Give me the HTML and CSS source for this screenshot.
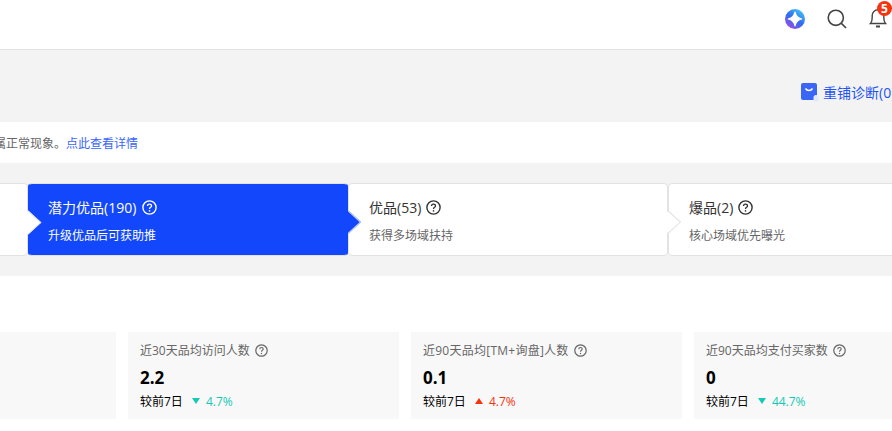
FILE: index.html
```html
<!DOCTYPE html>
<html lang="en">
<head>
    <meta charset="UTF-8">
    <meta name="viewport" content="width=device-width, initial-scale=1.0">
    <title>商品诊断</title>
    <link rel="stylesheet" href="styles.css">
</head>
<body>
    <!-- Top bar -->
    <header class="topbar">
        <svg class="top-icon ai-icon" width="20" height="20" viewBox="0 0 20 20">
            <defs>
                <linearGradient id="aiGrad" x1="0.85" y1="0.05" x2="0.2" y2="1">
                    <stop offset="0" stop-color="#45c8f7"/>
                    <stop offset="0.5" stop-color="#2f6cf0"/>
                    <stop offset="1" stop-color="#a24be6"/>
                </linearGradient>
            </defs>
            <circle cx="10" cy="10" r="10" fill="url(#aiGrad)"/>
            <path d="M10 3.2C10.8 7 13 9.2 16.8 10C13 10.8 10.8 13 10 16.8C9.2 13 7 10.8 3.2 10C7 9.2 9.2 7 10 3.2Z" fill="#fff" stroke="#fff" stroke-width="1.2" stroke-linejoin="round"/>
        </svg>
        <svg class="top-icon search-icon" width="20" height="20" viewBox="0 0 20 20" fill="none" stroke="#444" stroke-width="1.6">
            <circle cx="8.8" cy="8.8" r="7.6"/>
            <path d="M14.4 14.4L19 19"/>
        </svg>
        <div class="bell">
            <svg width="18" height="22" viewBox="0 0 18 22" fill="none" stroke="#444" stroke-width="1.4">
                <path d="M1.5 17.5C3 16 3.2 14.5 3.2 11.5V9.5C3.2 6.2 5.8 3.8 9 3.8C12.2 3.8 14.8 6.2 14.8 9.5V11.5C14.8 14.5 15 16 16.5 17.5Z"/>
                <path d="M7 20.5H11" stroke-width="2"/>
            </svg>
            <span class="badge">5</span>
        </div>
    </header>

    <!-- Toolbar -->
    <div class="toolbar">
        <svg class="toolbar-icon" width="18" height="20" viewBox="0 0 18 20">
            <rect x="0" y="1" width="16" height="17" rx="2" fill="#3a66f5"/>
            <path d="M4.5 6.5C6 9 10 9 11.5 6.5" fill="none" stroke="#fff" stroke-width="1.5"/>
            <rect x="12.5" y="13" width="5" height="7" rx="2.5" fill="#e3e9fd"/>
        </svg>
        <span class="toolbar-link">重铺诊断(0)</span>
    </div>

    <!-- Notice -->
    <div class="notice">
        <div class="notice-text">
            <span>数据变化属正常现象。</span>
            <a class="notice-link">点此查看详情</a>
        </div>
    </div>

    <!-- Steps -->
    <div class="steps-band">
        <div class="steps">
            <div class="step step-first"></div>
            <div class="step step-active">
                <div class="step-title">潜力优品(190)
                    <svg class="help" width="15" height="15" viewBox="0 0 15 15"><use href="#helpIcon"/></svg>
                </div>
                <div class="step-sub">升级优品后可获助推</div>
                <span class="arrow arrow-blue"></span>
            </div>
            <div class="step">
                <div class="step-title">优品(53)
                    <svg class="help" width="15" height="15" viewBox="0 0 15 15"><use href="#helpIcon"/></svg>
                </div>
                <div class="step-sub">获得多场域扶持</div>
                <span class="arrow"></span>
            </div>
            <div class="step">
                <div class="step-title">爆品(2)
                    <svg class="help" width="15" height="15" viewBox="0 0 15 15"><use href="#helpIcon"/></svg>
                </div>
                <div class="step-sub">核心场域优先曝光</div>
            </div>
        </div>
    </div>

    <!-- Metric cards -->
    <div class="cards">
        <div class="card"></div>
        <div class="card">
            <div class="card-label">近30天品均访问人数
                <svg class="help help-sm" width="13" height="13" viewBox="0 0 15 15"><use href="#helpIcon"/></svg>
            </div>
            <div class="card-value">2.2</div>
            <div class="card-compare">较前7日 <i class="tri tri-down"></i><span class="pct pct-down">4.7%</span></div>
        </div>
        <div class="card">
            <div class="card-label card-label-wide">近90天品均[TM+询盘]人数
                <svg class="help help-sm" width="13" height="13" viewBox="0 0 15 15"><use href="#helpIcon"/></svg>
            </div>
            <div class="card-value">0.1</div>
            <div class="card-compare">较前7日 <i class="tri tri-up"></i><span class="pct pct-up">4.7%</span></div>
        </div>
        <div class="card">
            <div class="card-label">近90天品均支付买家数
                <svg class="help help-sm" width="13" height="13" viewBox="0 0 15 15"><use href="#helpIcon"/></svg>
            </div>
            <div class="card-value">0</div>
            <div class="card-compare">较前7日 <i class="tri tri-down"></i><span class="pct pct-down">44.7%</span></div>
        </div>
    </div>

    <!-- Shared help icon -->
    <svg class="defs" width="0" height="0">
        <symbol id="helpIcon" viewBox="0 0 15 15">
            <circle cx="7.5" cy="7.5" r="6.6" fill="none" stroke="currentColor" stroke-width="1.4"/>
            <path d="M5.5 6C5.5 4.8 6.4 4.1 7.5 4.1C8.7 4.1 9.5 4.9 9.5 5.9C9.5 7.3 7.5 7.3 7.5 9" fill="none" stroke="currentColor" stroke-width="1.3"/>
            <circle cx="7.5" cy="10.9" r="0.8" fill="currentColor"/>
        </symbol>
    </svg>
</body>
</html>
```

FILE: styles.css
```css
* {
    box-sizing: border-box;
}

html, body {
    height: 100%;
}

body {
    margin: 0;
    background: #fff;
    overflow: hidden;
    font-family: "Open Sans", "Noto Sans CJK SC", sans-serif;
    color: #333;
}

.topbar {
    display: flex;
    justify-content: flex-end;
    align-items: center;
    height: 50px;
    padding: 0 5px 12px 0;
    background: #fff;
    border-bottom: 1px solid #e2e2e2;
}

.ai-icon {
    margin-right: 22px;
}

.search-icon {
    margin-right: 22px;
}

.bell {
    position: relative;
    width: 18px;
    height: 22px;
    margin-bottom: 4px;
}

.badge {
    position: absolute;
    top: -5px;
    left: 8px;
    width: 15px;
    height: 15px;
    border-radius: 50%;
    background: #f5330f;
    color: #fff;
    font-size: 12px;
    font-weight: 700;
    line-height: 15px;
    text-align: center;
}

.toolbar {
    display: flex;
    align-items: center;
    height: 72px;
    padding: 12px 0 0 801px;
    background: #f3f3f3;
    white-space: nowrap;
}

.toolbar-icon {
    flex-shrink: 0;
    margin-right: 4px;
}

.toolbar-link {
    font-size: 14px;
    color: #1f55f5;
}

.notice {
    height: 41px;
    background: #fff;
    display: flex;
    align-items: center;
}

.notice-text {
    display: flex;
    justify-content: flex-end;
    width: 138px;
    font-size: 12px;
    color: #666;
    white-space: nowrap;
}

.notice-link {
    color: #3a66f5;
}

.steps-band {
    height: 113px;
    padding-top: 20px;
    background: #f3f3f3;
}

.steps {
    display: flex;
    height: 73px;
    margin-left: -292px;
}

.step {
    position: relative;
    flex: 0 0 320px;
    padding: 13px 20px 0;
    background: #fff;
    border: 1px solid #e2e2e2;
    border-radius: 4px;
    color: #333;
}

.step-title {
    display: flex;
    align-items: center;
    gap: 4px;
    height: 20px;
    font-size: 14px;
}

.step-sub {
    margin-top: 10px;
    font-size: 12px;
    line-height: 18px;
    color: #666;
}

.step-active {
    padding-left: 19px;
    background: #1247fb;
    border-color: #e2e2e2 #1247fb;
    color: #fff;
}

.step-active .step-title {
    gap: 5px;
}

.step-active .step-sub {
    color: #fff;
}

/* chevron between two steps, sits on the shared edge */
.arrow {
    position: absolute;
    top: 30px;
    right: -9px;
    z-index: 2;
    width: 15.5px;
    height: 15.5px;
    background: #fff;
    border-top: 1px solid #e2e2e2;
    border-right: 1px solid #e2e2e2;
    transform: scaleX(1.09) rotate(45deg);
}

.arrow-blue {
    background: #1247fb;
    border-color: #c9d4f7;
}

.step-first + .step-active::before {
    content: "";
    position: absolute;
    top: 30px;
    left: -9px;
    width: 15.5px;
    height: 15.5px;
    background: #fff;
    border-top: 1px solid #e2e2e2;
    border-right: 1px solid #e2e2e2;
    transform: scaleX(1.09) rotate(45deg);
}

.help {
    flex-shrink: 0;
    margin-left: 1px;
}

.defs {
    position: absolute;
}

.cards {
    display: flex;
    gap: 12px;
    margin: 56px 0 0 -155px;
}

.card {
    flex: 0 0 271px;
    height: 87px;
    padding: 9px 12px 0;
    background: #f8f8f8;
}

.card-label {
    display: flex;
    align-items: center;
    gap: 4px;
    height: 18px;
    font-size: 12px;
    color: #666;
}

.card-label-wide {
    letter-spacing: 0.25px;
}

.help-sm {
    margin-left: 1px;
}

.card-value {
    margin-top: 8px;
    height: 22px;
    font-size: 17px;
    font-weight: 700;
    line-height: 22px;
    color: #000;
}

.card-compare {
    display: flex;
    align-items: center;
    margin-top: 3px;
    height: 18px;
    font-size: 12px;
    color: #000;
    white-space: nowrap;
}

.tri {
    width: 0;
    height: 0;
    margin: 0 6px 0 9px;
    border-left: 4.5px solid transparent;
    border-right: 4.5px solid transparent;
}

.tri-down {
    border-top: 6px solid #14c9b5;
}

.tri-up {
    border-bottom: 6px solid #f5330f;
}

.pct-down {
    color: #14c9b5;
}

.pct-up {
    color: #f5330f;
}
```
